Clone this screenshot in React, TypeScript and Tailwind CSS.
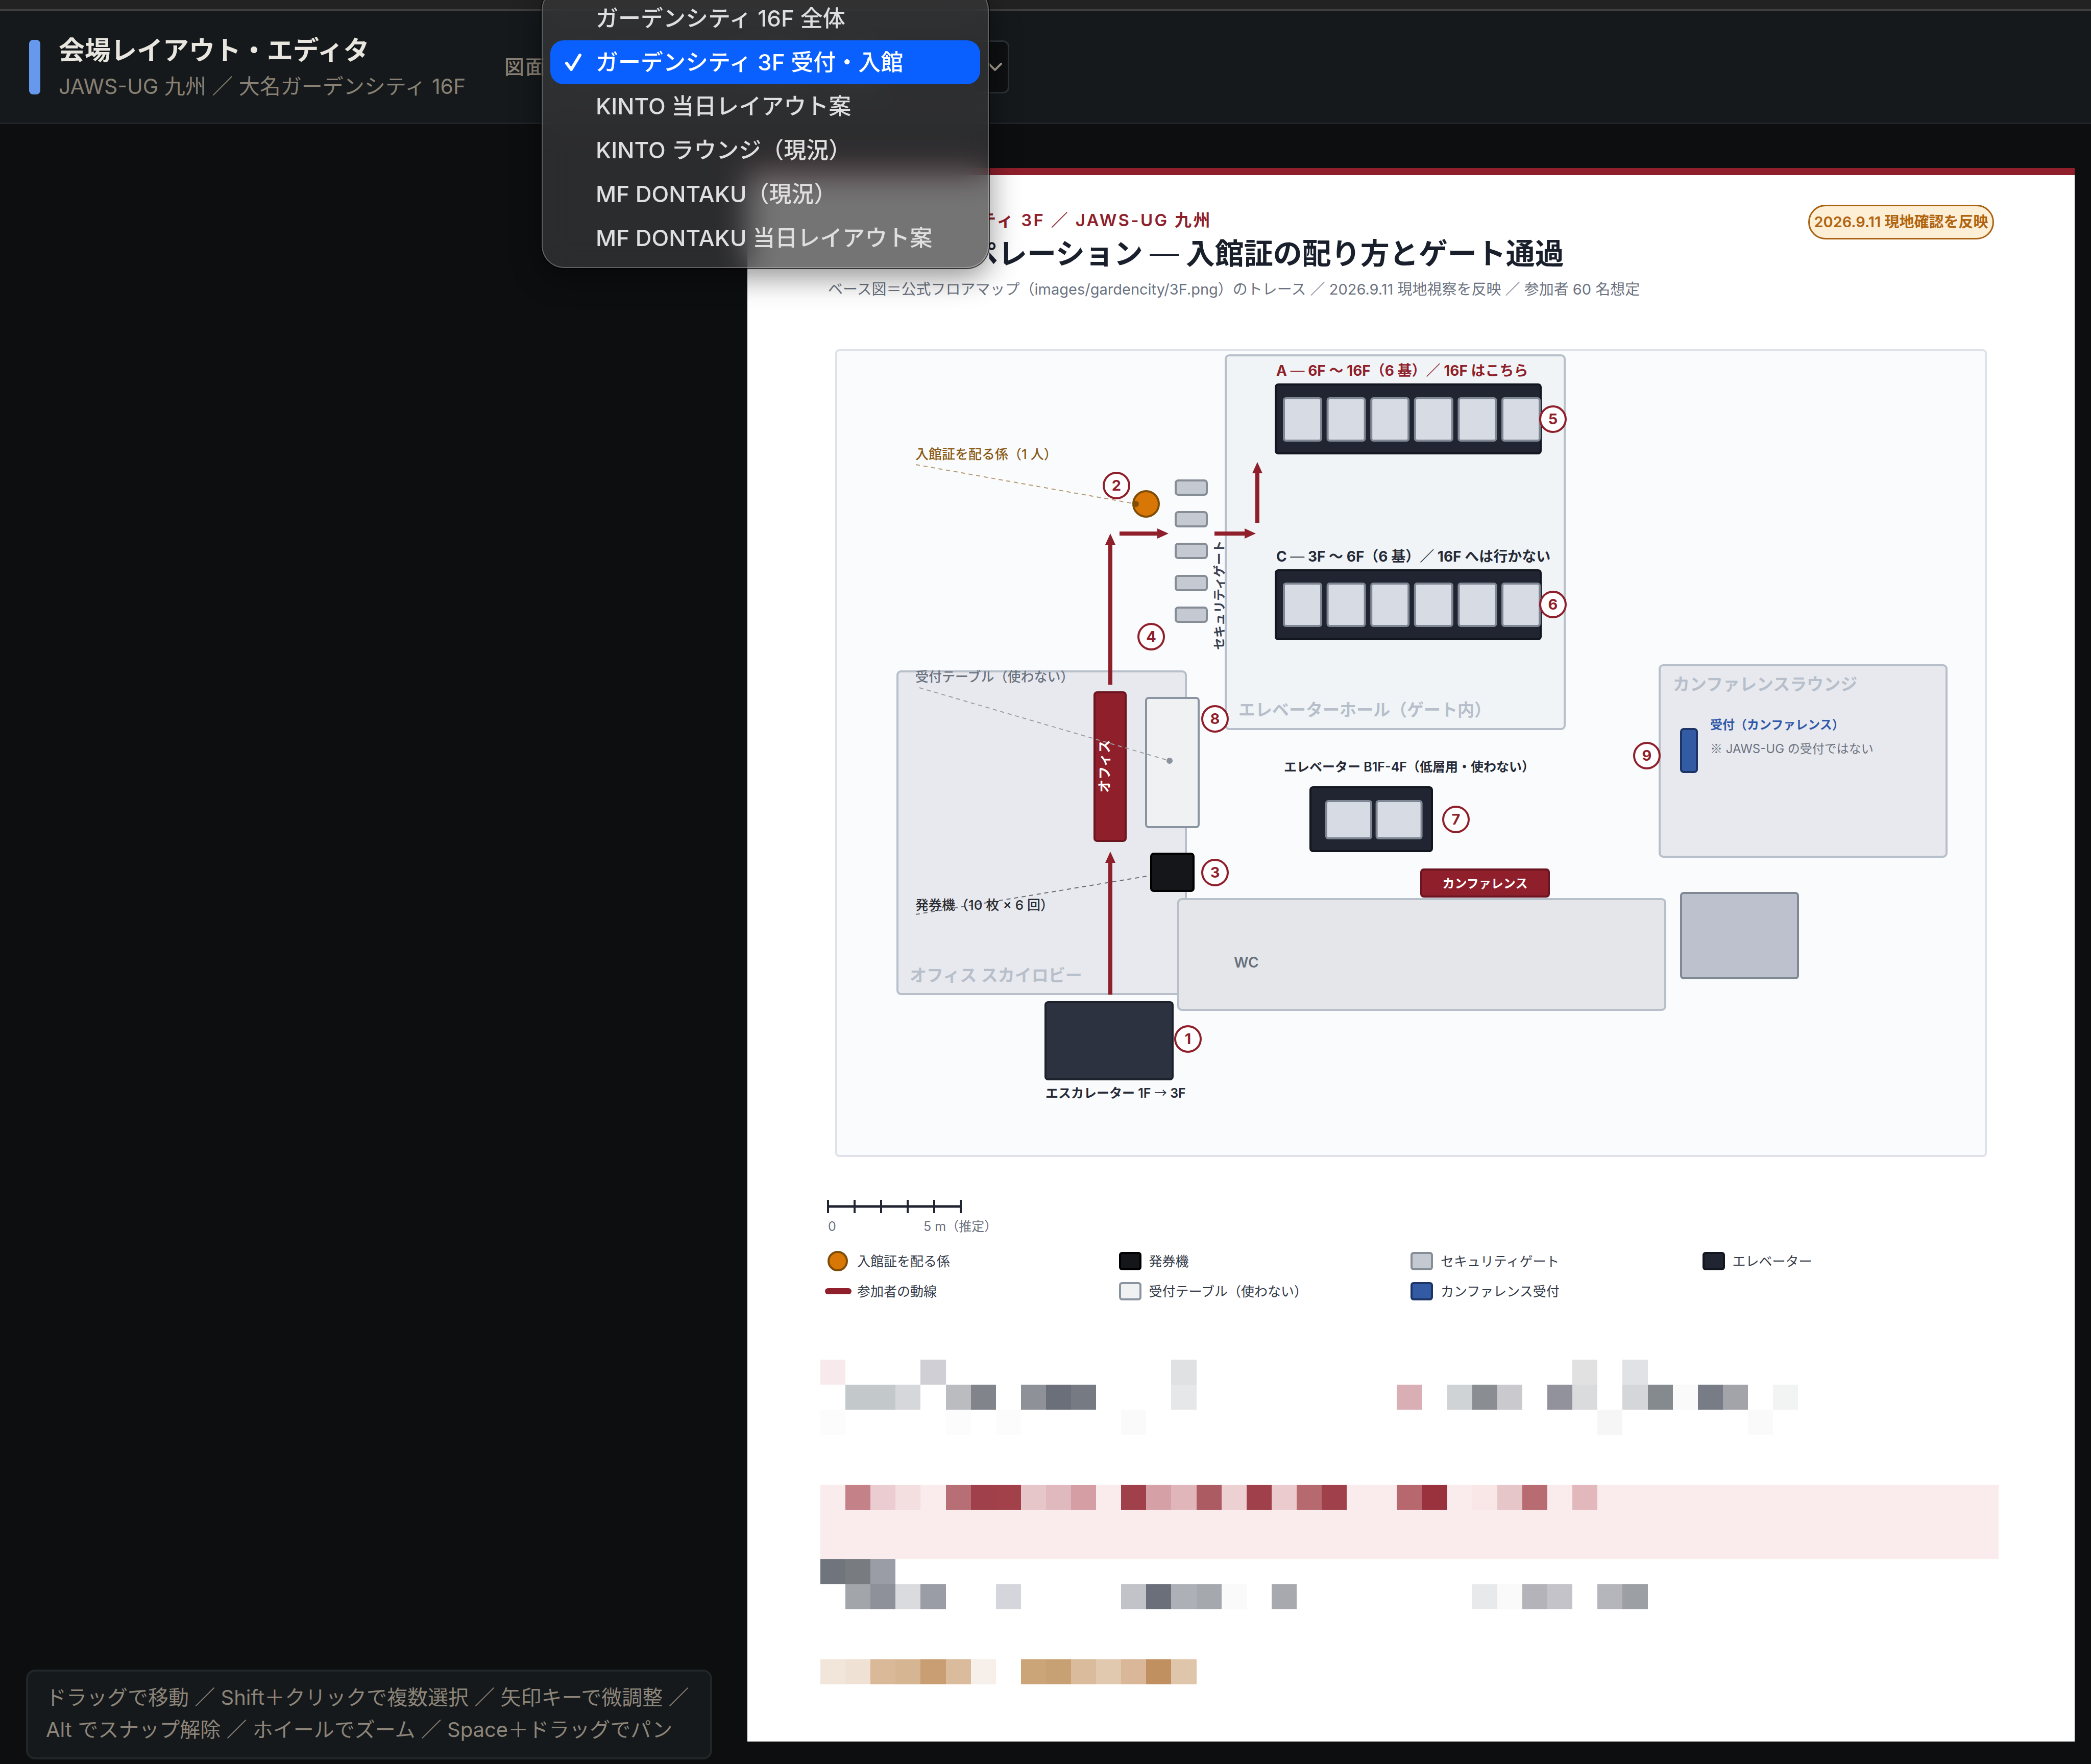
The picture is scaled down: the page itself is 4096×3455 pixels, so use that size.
import { ChevronDown } from "lucide-react";

const plans = [
    "ガーデンシティ 16F 全体",
    "ガーデンシティ 3F 受付・入館",
    "KINTO 当日レイアウト案",
    "KINTO ラウンジ（現況）",
    "MF DONTAKU（現況）",
    "MF DONTAKU 当日レイアウト案",
];

const selectedPlan = plans[1];

const legend = [
    { label: "入館証を配る係", swatch: "ml-px size-10 rounded-full border-4 border-[#7f4d08] bg-[#d97706]" },
    { label: "発券機", swatch: "h-9 w-11 rounded-md border-4 border-black bg-[#15161a]" },
    { label: "セキュリティゲート", swatch: "h-9 w-11 rounded-md border-4 border-[#858d97] bg-[#c5c9d1]" },
    { label: "エレベーター", swatch: "h-9 w-11 rounded-md border-4 border-[#12161f] bg-[#202531]" },
    { label: "参加者の動線", swatch: "-ml-1 h-3 w-13 rounded-full bg-[#8f1f2b]" },
    { label: "受付テーブル（使わない）", swatch: "h-9 w-11 rounded-md border-4 border-[#8a94a0] bg-[#f0f1f3]" },
    { label: "カンファレンス受付", swatch: "h-9 w-11 rounded-md border-4 border-[#1c3566] bg-[#335ba3]" },
];

const gates = [257, 319, 381, 444, 506];

const markers = [
    { n: 1, x: 691, y: 1351 },
    { n: 2, x: 551, y: 267 },
    { n: 3, x: 744, y: 1025 },
    { n: 4, x: 619, y: 563 },
    { n: 5, x: 1406, y: 137 },
    { n: 6, x: 1406, y: 500 },
    { n: 7, x: 1216, y: 921 },
    { n: 8, x: 744, y: 724 },
    { n: 9, x: 1590, y: 796 },
];

// [row, column, colour] of each masked cell, on a 47 x 13 grid
const cells: [number, number, string][] = [
    [0, 0, "#f8eaec"], [0, 4, "#cfcfd5"], [0, 14, "#e0e1e2"], [0, 30, "#e1e1e1"], [0, 32, "#e1e2e6"],
    [1, 1, "#c3c8cb"], [1, 2, "#c3c8cb"], [1, 3, "#d5d7db"], [1, 5, "#bbbcc0"], [1, 6, "#82848c"],
    [1, 8, "#8f9199"], [1, 9, "#6b6f79"], [1, 10, "#757a83"], [1, 14, "#e6e7e9"], [1, 23, "#d9aeb4"],
    [1, 25, "#cfd3d6"], [1, 26, "#8a8d91"], [1, 27, "#c9c9ce"], [1, 29, "#91929b"], [1, 30, "#dadbdd"],
    [1, 32, "#d5d6d9"], [1, 33, "#858a8e"], [1, 34, "#fafafa"], [1, 35, "#787c86"], [1, 36, "#a3a4aa"],
    [1, 38, "#f2f4f4"],
    [2, 0, "#fcfcfc"], [2, 5, "#fcfcfc"], [2, 7, "#fcfcfc"], [2, 12, "#fafafa"], [2, 31, "#f6f6f6"],
    [2, 37, "#fafafa"],
    [5, 1, "#c48187"], [5, 2, "#ebccd1"], [5, 3, "#f3dee0"], [5, 5, "#b86e75"], [5, 6, "#a0404a"],
    [5, 7, "#a24149"], [5, 8, "#e7c6ca"], [5, 9, "#e0b9be"], [5, 10, "#d49ea4"], [5, 12, "#a0404a"],
    [5, 13, "#d5a1a7"], [5, 14, "#e0b6ba"], [5, 15, "#ad5b63"], [5, 16, "#edd0d2"], [5, 17, "#a0404a"],
    [5, 18, "#ebcbce"], [5, 19, "#b6696f"], [5, 20, "#a0404a"], [5, 23, "#b7686f"], [5, 24, "#9a323d"],
    [5, 26, "#f9e7e8"], [5, 27, "#e7c6c9"], [5, 28, "#b86b71"], [5, 30, "#e2b8bd"],
    [8, 0, "#70757d"], [8, 1, "#787c81"], [8, 2, "#9a9da6"],
    [9, 1, "#a2a6ab"], [9, 2, "#8f919a"], [9, 3, "#dadbde"], [9, 4, "#9a9ca6"], [9, 7, "#d5d6db"],
    [9, 12, "#c1c3c8"], [9, 13, "#6b6f79"], [9, 14, "#adb1b7"], [9, 15, "#a5a9ae"], [9, 16, "#fafafa"],
    [9, 18, "#a8a9af"], [9, 26, "#e8e9ea"], [9, 27, "#fafafa"], [9, 28, "#b3b3b9"], [9, 29, "#c3c3c9"],
    [9, 31, "#b5b6bb"], [9, 32, "#9c9fa4"],
    [12, 0, "#f2e6da"], [12, 1, "#efe2d5"], [12, 2, "#dab999"], [12, 3, "#d6b593"], [12, 4, "#c99e72"],
    [12, 5, "#dabb9c"], [12, 6, "#f7efe9"], [12, 8, "#cba577"], [12, 9, "#c7a073"], [12, 10, "#dabc9c"],
    [12, 11, "#e1c9af"], [12, 12, "#dab798"], [12, 13, "#c19060"], [12, 14, "#dfc5aa"],
];

function PlanMenu() {
    return (
        <ul
            role="listbox"
            aria-label="図面"
            className="absolute -top-[104px] -left-[19px] z-20 w-[876px] rounded-[44px] border-2 border-white/25 bg-[#39393a]/70 px-[15px] pt-4 pb-3.5 shadow-[0_0_0_2px_rgba(0,0,0,0.7),0_16px_60px_rgba(0,0,0,0.45)] backdrop-blur-[30px]"
        >
            {plans.map((plan) => {
                const active = plan === selectedPlan;
                return (
                    <li
                        key={plan}
                        role="option"
                        aria-selected={active}
                        className={`flex h-[86px] items-center rounded-[26px] pl-7 text-[44px] font-medium whitespace-nowrap ${active ? "bg-[#0a60ff] text-white" : "text-[#dfdfdf]"}`}
                    >
                        <span className="w-[61px] shrink-0">
                            {active && (
                                <svg viewBox="0 0 34 34" className="size-[34px]" fill="none" stroke="currentColor" strokeWidth="6" strokeLinecap="round" strokeLinejoin="round" aria-hidden="true">
                                    <path d="M4 19l9 12L30 3" />
                                </svg>
                            )}
                        </span>
                        {plan}
                    </li>
                );
            })}
        </ul>
    );
}

function Header() {
    return (
        <header className="flex h-[221px] items-center border-b-3 border-[#212529] bg-[#15191c] pl-[57px]">
            <div className="h-[107px] w-[22px] rounded-lg bg-[#6699ee]" />
            <div className="ml-9 w-[837px] pt-1">
                <h1 className="text-[51px] leading-[72px] font-bold text-[#e9e6df]">会場レイアウト・エディタ</h1>
                <p className="text-[41px] leading-[68px] text-[#8a8175]">JAWS-UG 九州 ／ 大名ガーデンシティ 16F</p>
            </div>
            <label htmlFor="plan" className="ml-9 w-[92px] shrink-0 text-[39px] font-medium tracking-wider whitespace-nowrap text-[#8a8175]">
                図面
            </label>
            <div className="relative w-[897px]">
                <select
                    id="plan"
                    defaultValue={selectedPlan}
                    className="h-[104px] w-full appearance-none rounded-xl border-3 border-[#2c3338] bg-[#0e1012] pr-16 pl-7 text-[44px] text-[#e9e6df]"
                >
                    {plans.map((plan) => (
                        <option key={plan}>{plan}</option>
                    ))}
                </select>
                <ChevronDown className="pointer-events-none absolute top-7 right-1 size-12 text-[#a8a090]" strokeWidth={2} />
                <PlanMenu />
            </div>
        </header>
    );
}

function Arrow({ from, to }: { from: [number, number]; to: [number, number] }) {
    const [x1, y1] = from;
    const [x2, y2] = to;
    const vertical = x1 === x2;
    return (
        <g fill="#8f1f2b" stroke="none">
            <line
                x1={x1}
                y1={y1}
                x2={vertical ? x2 : x2 - 20}
                y2={vertical ? y2 + 20 : y2}
                stroke="#8f1f2b"
                strokeWidth="8"
            />
            {vertical ? (
                <polygon points={`${x2},${y2} ${x2 - 10},${y2 + 22} ${x2 + 10},${y2 + 22}`} />
            ) : (
                <polygon points={`${x2},${y2} ${x2 - 22},${y2 - 10} ${x2 - 22},${y2 + 10}`} />
            )}
        </g>
    );
}

function Cars({ x, y, count, width, height, step }: { x: number; y: number; count: number; width: number; height: number; step: number }) {
    return (
        <g fill="#d7dbe4" stroke="#7f8694" strokeWidth="4">
            {Array.from({ length: count }, (_, i) => (
                <rect key={i} x={x + i * step} y={y} width={width} height={height} rx="4" />
            ))}
        </g>
    );
}

function FloorMap() {
    return (
        <svg viewBox="0 0 2256 1582" className="block w-full" role="img" aria-label="ガーデンシティ 3F 受付・入館の平面図">
            <rect x="2" y="2" width="2252" height="1578" rx="6" fill="#fafbfd" stroke="#dfe2ea" strokeWidth="4" />

            {/* areas */}
            <g stroke="#b7c0ca" strokeWidth="4">
                <rect x="765" y="12" width="664" height="732" rx="7" fill="#f0f4f7" />
                <rect x="122" y="631" width="565" height="632" rx="7" fill="#e8e9ee" />
                <rect x="672" y="1077" width="954" height="217" rx="7" fill="#e5e6ea" />
                <rect x="1615" y="619" width="562" height="375" rx="7" fill="#e8e9ee" />
            </g>
            <g fill="#b7bfcb" fontSize="33" fontWeight="600">
                <text x="790" y="718">エレベーターホール（ゲート内）</text>
                <text x="146" y="1238">オフィス スカイロビー</text>
                <text x="1641" y="668">カンファレンスラウンジ</text>
            </g>

            {/* elevators */}
            <g fill="#202531" stroke="#12161f" strokeWidth="4">
                <rect x="863" y="69" width="519" height="135" rx="5" />
                <rect x="863" y="433" width="519" height="135" rx="5" />
                <rect x="931" y="858" width="238" height="125" rx="5" />
            </g>
            <Cars x={879} y={96} count={6} width={73} height={83} step={85.6} />
            <Cars x={879} y={459} count={6} width={73} height={83} step={85.6} />
            <Cars x={962} y={885} count={2} width={88} height={73} step={98.6} />
            <g fontSize="28" fontWeight="700">
                <text x="864" y="52" fill="#8f1f2b">
                    A <tspan fontWeight="300">—</tspan> 6F 〜 16F（6 基）／ 16F はこちら
                </text>
                <text x="864" y="416" fill="#252a36">
                    C <tspan fontWeight="300">—</tspan> 3F 〜 6F（6 基）／ 16F へは行かない
                </text>
            </g>
            <text x="879" y="827" fontSize="25" fontWeight="600" fill="#252a36">エレベーター B1F-4F（低層用・使わない）</text>

            {/* fixtures */}
            <g strokeWidth="4">
                {gates.map((y) => (
                    <rect key={y} x="667" y={y} width="61" height="28" rx="5" fill="#c5c9d1" stroke="#858d97" />
                ))}
                <rect x="508" y="672" width="61" height="291" rx="5" fill="#8f1f2b" stroke="#6b1520" />
                <rect x="609" y="683" width="103" height="253" rx="5" fill="#f0f1f3" stroke="#8a94a0" />
                <rect x="619" y="988" width="83" height="73" rx="5" fill="#15161a" stroke="#000000" />
                <rect x="412" y="1279" width="249" height="151" rx="5" fill="#2d3240" stroke="#1c212c" />
                <rect x="1148" y="1019" width="250" height="53" rx="5" fill="#8f1f2b" stroke="#6b1520" />
                <rect x="1657" y="744" width="31" height="84" rx="5" fill="#335ba3" stroke="#1c3566" />
                <rect x="1657" y="1065" width="229" height="167" rx="5" fill="#bdc1cd" stroke="#808893" />
                <circle cx="609" cy="303" r="25" fill="#d97706" stroke="#7f4d08" />
            </g>
            <text x="781" y="1211" fontSize="28" fontWeight="600" fill="#66707c">WC</text>
            <text x="412" y="1466" fontSize="25" fontWeight="600" fill="#252a36">
                エスカレーター 1F <tspan fontFamily="Noto Sans CJK JP" fontWeight="400">→</tspan> 3F
            </text>
            <text x="1273" y="1055" fontSize="24" fontWeight="700" fill="#ffffff" textAnchor="middle">カンファレンス</text>
            <text transform="translate(537 817) rotate(-90)" fontSize="26" fontWeight="700" fill="#ffffff" textAnchor="middle">オフィス</text>
            <text transform="translate(761 589) rotate(-90)" fontSize="24" fontWeight="600" fill="#3a4150">セキュリティゲート</text>
            <text x="1714" y="744" fontSize="24" fontWeight="700" fill="#2f59a8">受付（カンファレンス）</text>
            <text x="1714" y="791" fontSize="24" fill="#6b7280">
                <tspan fontFamily="Noto Sans CJK JP">※</tspan> JAWS-UG の受付ではない
            </text>

            {/* route */}
            <Arrow from={[539, 1264]} to={[539, 984]} />
            <Arrow from={[539, 657]} to={[539, 361]} />
            <Arrow from={[557, 361]} to={[653, 361]} />
            <Arrow from={[743, 361]} to={[824, 361]} />
            <Arrow from={[827, 340]} to={[827, 221]} />

            {/* callouts */}
            <g strokeWidth="2" strokeDasharray="8 7">
                <line x1="158" y1="226" x2="589" y2="303" stroke="#b59a6f" />
                <line x1="165" y1="663" x2="655" y2="806" stroke="#9aa0a8" />
                <line x1="158" y1="1107" x2="617" y2="1031" stroke="#6a6c72" />
            </g>
            <circle cx="589" cy="303" r="6" fill="#7f4d08" />
            <circle cx="655" cy="806" r="6" fill="#8a929b" />
            <g fontSize="26" fontWeight="500">
                <text x="157" y="215" fill="#8a5a14">入館証を配る係（1 人）</text>
                <text x="157" y="651" fill="#6b7280">受付テーブル（使わない）</text>
                <text x="157" y="1098" fill="#2a2b2f">発券機（10 枚 × 6 回）</text>
            </g>

            {markers.map(({ n, x, y }) => (
                <g key={n}>
                    <circle cx={x} cy={y} r="25" fill="#ffffff" stroke="#8f1f2b" strokeWidth="4" />
                    <text x={x} y={y + 10} fontSize="29" fontWeight="700" fill="#8f1f2b" textAnchor="middle">{n}</text>
                </g>
            ))}
        </svg>
    );
}

function ScaleBar() {
    return (
        <div className="mt-[84px] -ml-0.5">
            <svg viewBox="0 0 264 26" className="block h-[26px] w-[264px]" stroke="#202531" aria-hidden="true">
                <line x1="1" y1="13" x2="263" y2="13" strokeWidth="5" />
                {[2, 54, 106, 158, 210, 262].map((x) => (
                    <line key={x} x1={x} y1="0" x2={x} y2="26" strokeWidth="4" />
                ))}
            </svg>
            <div className="mt-2 flex pl-0.5 text-[25px] leading-9 text-[#6b7280]">
                <span className="w-[187px]">0</span>
                <span>5 m（推定）</span>
            </div>
        </div>
    );
}

function MaskedNotes() {
    return (
        <svg viewBox="0 0 47 13" preserveAspectRatio="none" className="block h-[636px] w-full" shapeRendering="crispEdges" aria-hidden="true">
            <rect x="0" y="5" width="47" height="3" fill="#faebec" />
            {cells.map(([row, col, fill]) => (
                <rect key={`${row}-${col}`} x={col} y={row} width="1" height="1" fill={fill} />
            ))}
        </svg>
    );
}

function Sheet() {
    return (
        <article className="flex-1 border-t-14 border-[#8f1f2b] bg-white px-[158px]">
            <div className="flex items-start justify-between pt-[58px]">
                <div className="pt-2.5 whitespace-nowrap">
                    {/* headings are cut off where the open menu covers the sheet */}
                    <p className="ml-[316px] overflow-hidden text-[33px] leading-10 font-semibold tracking-widest text-[#8f1f2b]">
                        <span className="-ml-5 block">ティ 3F ／ JAWS-UG 九州</span>
                    </p>
                    <h2 className="mt-2.5 ml-[316px] overflow-hidden text-[57px] leading-[72px] font-bold text-[#1a1f2c]">
                        <span className="-ml-10 block">
                            ペレーション <span className="font-light">—</span> 入館証の配り方とゲート通過
                        </span>
                    </h2>
                    <p className="mt-3.5 text-[29px] leading-10 text-[#6b7280]">
                        ベース図＝公式フロアマップ（images/gardencity/3F.png）のトレース ／ 2026.9.11 現地視察を反映 ／ 参加者 60 名想定
                    </p>
                </div>
                <span className="flex h-[68px] w-[364px] items-center justify-center rounded-full border-3 border-[#a9620f] bg-[#fdeed6] text-[29px] font-semibold whitespace-nowrap text-[#b0640f]">
                    2026.9.11 現地確認を反映
                </span>
            </div>
            <div className="mt-[97px] px-3.5">
                <FloorMap />
            </div>
            <ScaleBar />
            <ul className="mt-[30px] -ml-0.5 grid grid-cols-4 gap-y-[19px]">
                {legend.map(({ label, swatch }) => (
                    <li key={label} className="flex h-10 items-center text-[26px] text-[#333a47]">
                        <span className="w-[59px] shrink-0">
                            <span className={`block ${swatch}`} />
                        </span>
                        {label}
                    </li>
                ))}
            </ul>
            <div className="mt-[114px] -mr-[9px] -ml-[15px]">
                <MaskedNotes />
            </div>
        </article>
    );
}

export default function App() {
    return (
        <div lang="ja" className="flex min-h-screen flex-col overflow-hidden bg-[#0d0e10] font-['Inter','Noto_Sans_CJK_JP',sans-serif]">
            <div className="h-[22px] border-b-4 border-[#3f3f3f] bg-[#222222]" />
            <Header />
            <main className="flex flex-1">
                <aside className="flex w-[1464px] shrink-0 flex-col justify-end pr-[69px] pb-[9px] pl-[51px]">
                    <p className="rounded-[18px] border-4 border-[#212629] bg-[#15191c] px-[35px] pt-[19px] pb-[23px] text-[40px] leading-[63px] whitespace-nowrap text-[#8d8579]">
                        ドラッグで移動 ／ Shift＋クリックで複数選択 ／ 矢印キーで微調整 ／
                        <br />
                        Alt でスナップ解除 ／ ホイールでズーム ／ Space＋ドラッグでパン
                    </p>
                </aside>
                <div className="flex flex-1 pt-[86px] pr-8 pb-11">
                    <Sheet />
                </div>
            </main>
        </div>
    );
}
